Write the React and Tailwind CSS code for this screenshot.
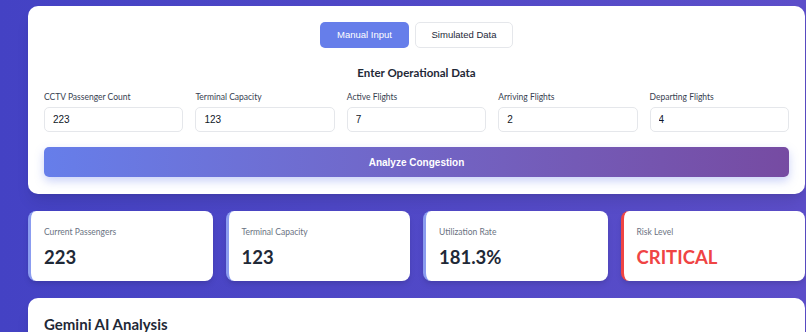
const fields = [
  { label: 'CCTV Passenger Count', value: '223' },
  { label: 'Terminal Capacity', value: '123' },
  { label: 'Active Flights', value: '7' },
  { label: 'Arriving Flights', value: '2' },
  { label: 'Departing Flights', value: '4' },
];

const stats = [
  { label: 'Current Passengers', value: '223' },
  { label: 'Terminal Capacity', value: '123' },
  { label: 'Utilization Rate', value: '181.3%' },
  { label: 'Risk Level', value: 'CRITICAL', danger: true },
];

export default function App() {
  return (
    <div
      className="min-h-screen h-[332px] overflow-hidden bg-gradient-to-r from-[#4442c4] to-[#5c4ec9] pl-[28px] pr-px pt-[6px]"
      style={{ fontFamily: 'Lato, "Open Sans", sans-serif' }}
    >
      {/* Input panel */}
      <div className="bg-white rounded-[10px] shadow-lg px-4 pt-4 pb-[17px]">
        <div className="flex justify-center gap-[6px]">
          <button className="h-[26px] w-[89px] rounded-[5px] bg-[#667eea] text-white text-[9.5px] font-['Liberation_Sans',sans-serif]">
            Manual Input
          </button>
          <button className="h-[26px] w-[98px] rounded-[5px] bg-white border border-gray-200 text-gray-800 text-[9.5px] font-['Liberation_Sans',sans-serif]">
            Simulated Data
          </button>
        </div>

        <h3 className="mt-[17px] text-center text-[11.5px] font-bold text-[#1f2937] leading-4">
          Enter Operational Data
        </h3>

        <div className="mt-[10px] grid grid-cols-5 gap-x-3">
          {fields.map((f) => (
            <div key={f.label}>
              <label className="block text-[8.5px] text-[#374151] leading-3 mb-[2px]">{f.label}</label>
              <input
                readOnly
                value={f.value}
                className="w-full h-[25px] rounded-[5px] border border-gray-200 px-2 text-[10px] text-gray-900 font-['Liberation_Sans',sans-serif] outline-none"
              />
            </div>
          ))}
        </div>

        <button className="mt-[15px] w-full h-[30px] rounded-[5px] bg-gradient-to-r from-[#667eea] to-[#764ba2] text-white text-[10px] font-bold font-['Liberation_Sans',sans-serif] shadow-[0_4px_10px_rgba(102,126,234,0.35)]">
          Analyze Congestion
        </button>
      </div>

      {/* Stats */}
      <div className="mt-[17px] grid grid-cols-4 gap-[13px]">
        {stats.map((s) => (
          <div
            key={s.label}
            className={`h-[70px] bg-white rounded-[8px] shadow-md border-l-[3px] pl-[13px] pt-[15px] ${s.danger ? 'border-[#ef4444]' : 'border-[#8b9cf0]'}`}
          >
            <div className="text-[8.5px] text-gray-500 leading-3">{s.label}</div>
            <div className={`mt-[7px] text-[18.5px] font-bold leading-6 ${s.danger ? 'text-[#ef4444]' : 'text-[#1f2937]'}`}>
              {s.value}
            </div>
          </div>
        ))}
      </div>

      {/* Analysis */}
      <div className="mt-[17px] bg-white rounded-[10px] shadow-lg px-4 pt-[16px] h-[80px]">
        <h3 className="text-[15px] font-bold text-[#1f2937] leading-5">Gemini AI Analysis</h3>
      </div>
    </div>
  );
}
